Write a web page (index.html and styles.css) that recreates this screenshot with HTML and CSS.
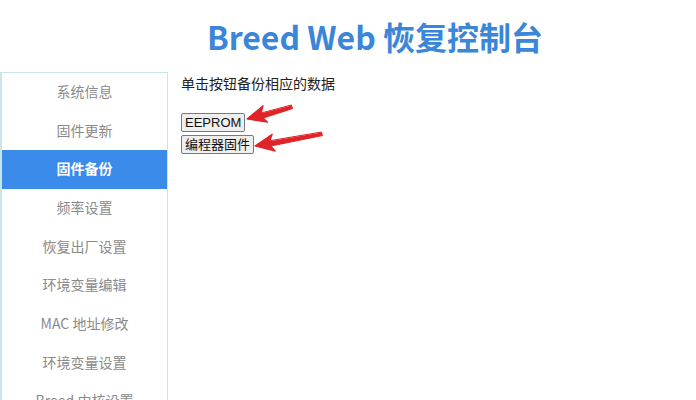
FILE: index.html
```html
<!DOCTYPE html>
<html lang="zh-CN">
<head>
<meta charset="utf-8">
<title>Breed Web 恢复控制台</title>
<link rel="stylesheet" href="styles.css">
</head>
<body>
<header class="header">
  <h1 class="title">Breed Web 恢复控制台</h1>
</header>
<div class="layout">
  <nav class="sidebar">
    <a class="nav-item">系统信息</a>
    <a class="nav-item">固件更新</a>
    <a class="nav-item active">固件备份</a>
    <a class="nav-item">频率设置</a>
    <a class="nav-item">恢复出厂设置</a>
    <a class="nav-item">环境变量编辑</a>
    <a class="nav-item">MAC 地址修改</a>
    <a class="nav-item">环境变量设置</a>
    <a class="nav-item">Breed 内核设置</a>
    <a class="nav-item">重启</a>
  </nav>
  <main class="content">
    <p class="hint">单击按钮备份相应的数据</p>
    <div class="buttons">
      <button class="btn">EEPROM</button>
      <button class="btn">编程器固件</button>
    </div>
  </main>
</div>
<svg class="annotations" width="696" height="400" viewBox="0 0 696 400" aria-hidden="true">
  <g fill="#df2428" stroke="#df2428" stroke-linecap="round" stroke-linejoin="round">
    <polygon points="291.5,105.4 292.5,108.6 262,118.4 260.5,113.6" stroke-width="1"/>
    <polygon points="247,119 267.5,122.2 260.5,115.3 263.1,105.8" stroke-width="1.2"/>
    <polygon points="321.6,132.4 322.4,135.6 270,146.2 269.2,141.2" stroke-width="1"/>
    <polygon points="255,146 275.2,151.1 268.8,143.5 272.2,134.3" stroke-width="1.2"/>
  </g>
</svg>
</body>
</html>
```
FILE: styles.css
```css
html, body {
  margin: 0;
  padding: 0;
  height: 100%;
  overflow: hidden;
  background: #ffffff;
}
body {
  position: relative;
  font-family: "Noto Sans CJK SC", "Noto Sans", sans-serif;
  color: #222;
}
.header {
  height: 72px;
  display: flex;
  align-items: center;
  justify-content: center;
  padding-left: 54px;
  box-sizing: border-box;
}
.title {
  margin: 0;
  font-size: 32px;
  line-height: 40px;
  font-weight: 700;
  color: #3a86d8;
  padding-bottom: 1px;
}
.layout {
  display: flex;
  align-items: flex-start;
}
.sidebar {
  width: 168px;
  box-sizing: border-box;
  border: 1px solid #c6e7e9;
  border-bottom: none;
  border-left-width: 2px;
  display: flex;
  flex-direction: column;
  min-height: 400px;
}
.nav-item {
  display: flex;
  height: 38.7px;
  box-sizing: border-box;
  padding-bottom: 3px;
  align-items: center;
  justify-content: center;
  font-size: 14px;
  color: #8a8a8a;
  text-decoration: none;
}
.nav-item.active {
  background: #3b8bea;
  color: #ffffff;
  font-weight: 700;
}
.content {
  padding: 1px 0 0 13px;
}
.hint {
  margin: 0 0 20px;
  font-size: 14px;
  line-height: 20px;
  color: #222;
}
.buttons {
  display: flex;
  flex-direction: column;
  align-items: flex-start;
  gap: 3px;
}
.btn {
  font-family: "Liberation Sans", "Noto Sans CJK SC", sans-serif;
  font-size: 13px;
  line-height: 15px;
  padding: 1px 3px;
  margin: 0;
  border: 1px solid #7a7a7a;
  border-radius: 2px;
  background: #efefef;
  color: #111;
}
.annotations {
  position: absolute;
  left: 0;
  top: 0;
  pointer-events: none;
}
```
